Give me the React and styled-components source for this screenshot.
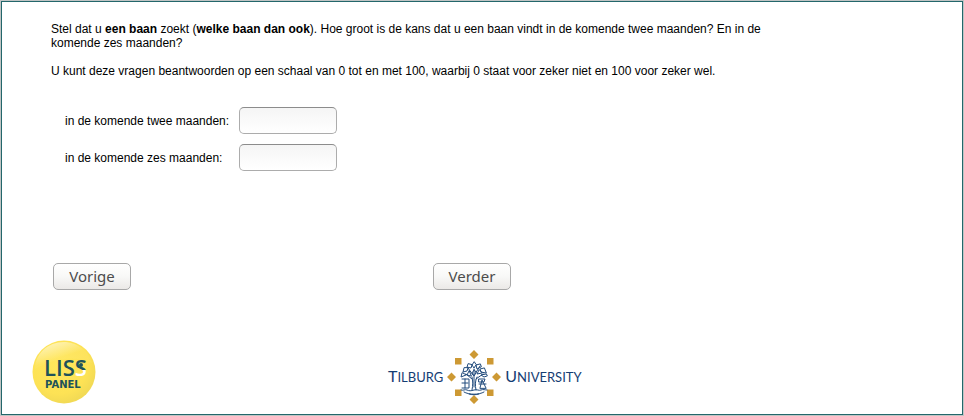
import React from "react";
import styled, { createGlobalStyle } from "styled-components";

const GlobalStyle = createGlobalStyle`
  *, *::before, *::after { box-sizing: border-box; }
  body {
    margin: 0;
    background: #c0c4c4;
    color: #000;
    font-family: "Liberation Sans", Arial, sans-serif;
    font-size: 12px;
    line-height: 14px;
  }
`;

const Page = styled.div`
  display: flex;
  min-height: 100vh;
  padding: 1px;
`;

const Panel = styled.form`
  display: flex;
  flex: 1;
  flex-direction: column;
  padding: 20px 30px 10px;
  border: 1px solid #23676b;
  background: #fff;
`;

const Question = styled.div`
  max-width: 740px;
  padding-left: 19px;
`;

const Paragraph = styled.p`
  margin: 0 0 14px;
`;

const Fields = styled.div`
  display: grid;
  grid-template-columns: max-content 98px;
  align-items: center;
  gap: 10px;
  margin-top: 15px;
  padding-left: 33px;
`;

const NumberInput = styled.input`
  width: 100%;
  height: 27px;
  padding: 2px 8px;
  border: 1px solid #acacac;
  border-top-color: #8c8c8c;
  border-radius: 5px;
  background: linear-gradient(#f5f5f5, #fff);
  font: inherit;
`;

const Navigation = styled.div`
  display: flex;
  gap: 302px;
  margin-top: 92px;
  padding-left: 21px;
`;

const NavButton = styled.button`
  width: 78px;
  height: 27px;
  padding: 0 0 2px;
  border: 1px solid #a8a8a8;
  border-radius: 5px;
  background: linear-gradient(#fff, #f8f8f7 50%, #ebe9e7);
  color: #4c4c4c;
  font: 15px/20px "Noto Sans", "Open Sans", sans-serif;
`;

const Footer = styled.footer`
  display: flex;
  align-items: center;
  gap: 292px;
  margin-top: 49px;
`;

const LissMark = styled.svg`
  flex: none;
  width: 64px;
  height: 64px;
`;

const University = styled.div`
  display: flex;
  align-items: center;
  gap: 4px;
  margin-top: 11px;
  color: #153d73;
`;

const Wordmark = styled.span`
  display: block;
  padding-bottom: 2px;
  font: 13px/20px Lato, sans-serif;
  text-transform: uppercase;

  &::first-letter {
    font-size: 16px;
  }
`;

const Emblem = styled.svg`
  flex: none;
  width: 54px;
  height: 54px;
`;

function LissLogo() {
  return (
    <LissMark viewBox="0 0 64 64" role="img" aria-label="LISS panel">
      <defs>
        <radialGradient id="sun" cx="42%" cy="38%" r="62%">
          <stop offset="0" stopColor="#ffe75c" />
          <stop offset="0.75" stopColor="#fde255" />
          <stop offset="1" stopColor="#f2da55" />
        </radialGradient>
        <linearGradient id="shine" x1="0" y1="0" x2="0.7" y2="1">
          <stop offset="0" stopColor="#fff" stopOpacity="0.75" />
          <stop offset="0.6" stopColor="#fff" stopOpacity="0.05" />
        </linearGradient>
        <linearGradient id="lastLetter" gradientUnits="userSpaceOnUse" x1="46" y1="20" x2="46" y2="36">
          <stop offset="0.62" stopColor="#20525a" />
          <stop offset="0.62" stopColor="#fff" />
        </linearGradient>
      </defs>
      <circle cx="32" cy="32" r="31.5" fill="url(#sun)" />
      <path d="M3 29C3 13 17 1 34 2c12 1 23 9 26 21C43 15 22 18 3 29Z" fill="url(#shine)" />
      <text x="12" y="36" fill="#20525a" fontFamily="'Open Sans', sans-serif" fontSize="22" fontWeight="600">
        LIS<tspan fill="url(#lastLetter)">S</tspan>
      </text>
      <circle cx="49" cy="25" r="2" fill="#20525a" />
      <text x="13" y="48" fill="#20525a" fontFamily="'DejaVu Sans', sans-serif" fontSize="10" fontWeight="700">PANEL</text>
    </LissMark>
  );
}

function TilburgEmblem() {
  return (
    <Emblem viewBox="0 0 54 54" aria-hidden="true">
      <g fill="#cd9934">
        <path d="m27 0 4.500 4.500L27 9l-4.500-4.500ZM27 45l4.500 4.500L27 54l-4.500-4.500ZM4.500 22.500 9 27l-4.500 4.500L0 27ZM49.500 22.500 54 27l-4.500 4.500L45 27Z" />
        <path d="M8 8h6.500v6.500H8ZM40 8h6.500v6.500H40ZM8 39.500h6.500V46H8ZM40 39.500h6.500V46H40Z" />
      </g>
      <g fill="none" stroke="#214b7c" strokeWidth="1" strokeLinecap="round" strokeLinejoin="round">
        <path d="M25 40c1-5 1-9 0-13M29 40c-1-5-1-9 1-13M27 37V19M25 29l-6-5M29 29l7-5M26 25l-5-7M28 24l5-8" />
        <path d="m27 12-2 3 2 3 2-3ZM21 14l-1 3 4 1 1-3ZM33 14l-4 1 1 4 4-2ZM17 18l-1 4 4-1 1-3ZM37 18l-4 1 1 3 5 1ZM15 23l-1 4 5-2ZM39 24l-5 1 3 2 3-1ZM22 21l-2 4 4 1ZM32 20l-2 4 5-1ZM27 20l-2 3 2 3 2-3Z" />
        <path d="M15 29h7v9h-7M18 29v9M15 33h6M32 29h6l-1 3h-5ZM32 34h7M33 38l2-8 4 8ZM14 40c2 1 4-1 6 0s4 1 7 0 5 1 7 0 4 0 6 0M17 42c5 3 15 3 20 0M22 44c3 1 7 1 10 0" />
      </g>
    </Emblem>
  );
}

const fields = [
  { id: "two-months", label: "in de komende twee maanden:" },
  { id: "six-months", label: "in de komende zes maanden:" },
];

export default function App() {
  return (
    <>
      <GlobalStyle />
      <Page>
        <Panel onSubmit={(event) => event.preventDefault()}>
          <Question>
            <Paragraph>
              Stel dat u <b>een baan</b> zoekt (<b>welke baan dan ook</b>). Hoe groot is de kans dat u een
              baan vindt in de komende twee maanden? En in de komende zes maanden?
            </Paragraph>
            <Paragraph>
              U kunt deze vragen beantwoorden op een schaal van 0 tot en met 100, waarbij 0 staat voor
              zeker niet en 100 voor zeker wel.
            </Paragraph>
          </Question>
          <Fields>
            {fields.map(({ id, label }) => (
              <React.Fragment key={id}>
                <label htmlFor={id}>{label}</label>
                <NumberInput id={id} type="text" inputMode="numeric" />
              </React.Fragment>
            ))}
          </Fields>
          <Navigation>
            <NavButton type="button">Vorige</NavButton>
            <NavButton type="submit">Verder</NavButton>
          </Navigation>
          <Footer>
            <LissLogo />
            <University>
              <Wordmark>Tilburg</Wordmark>
              <TilburgEmblem />
              <Wordmark>University</Wordmark>
            </University>
          </Footer>
        </Panel>
      </Page>
    </>
  );
}
